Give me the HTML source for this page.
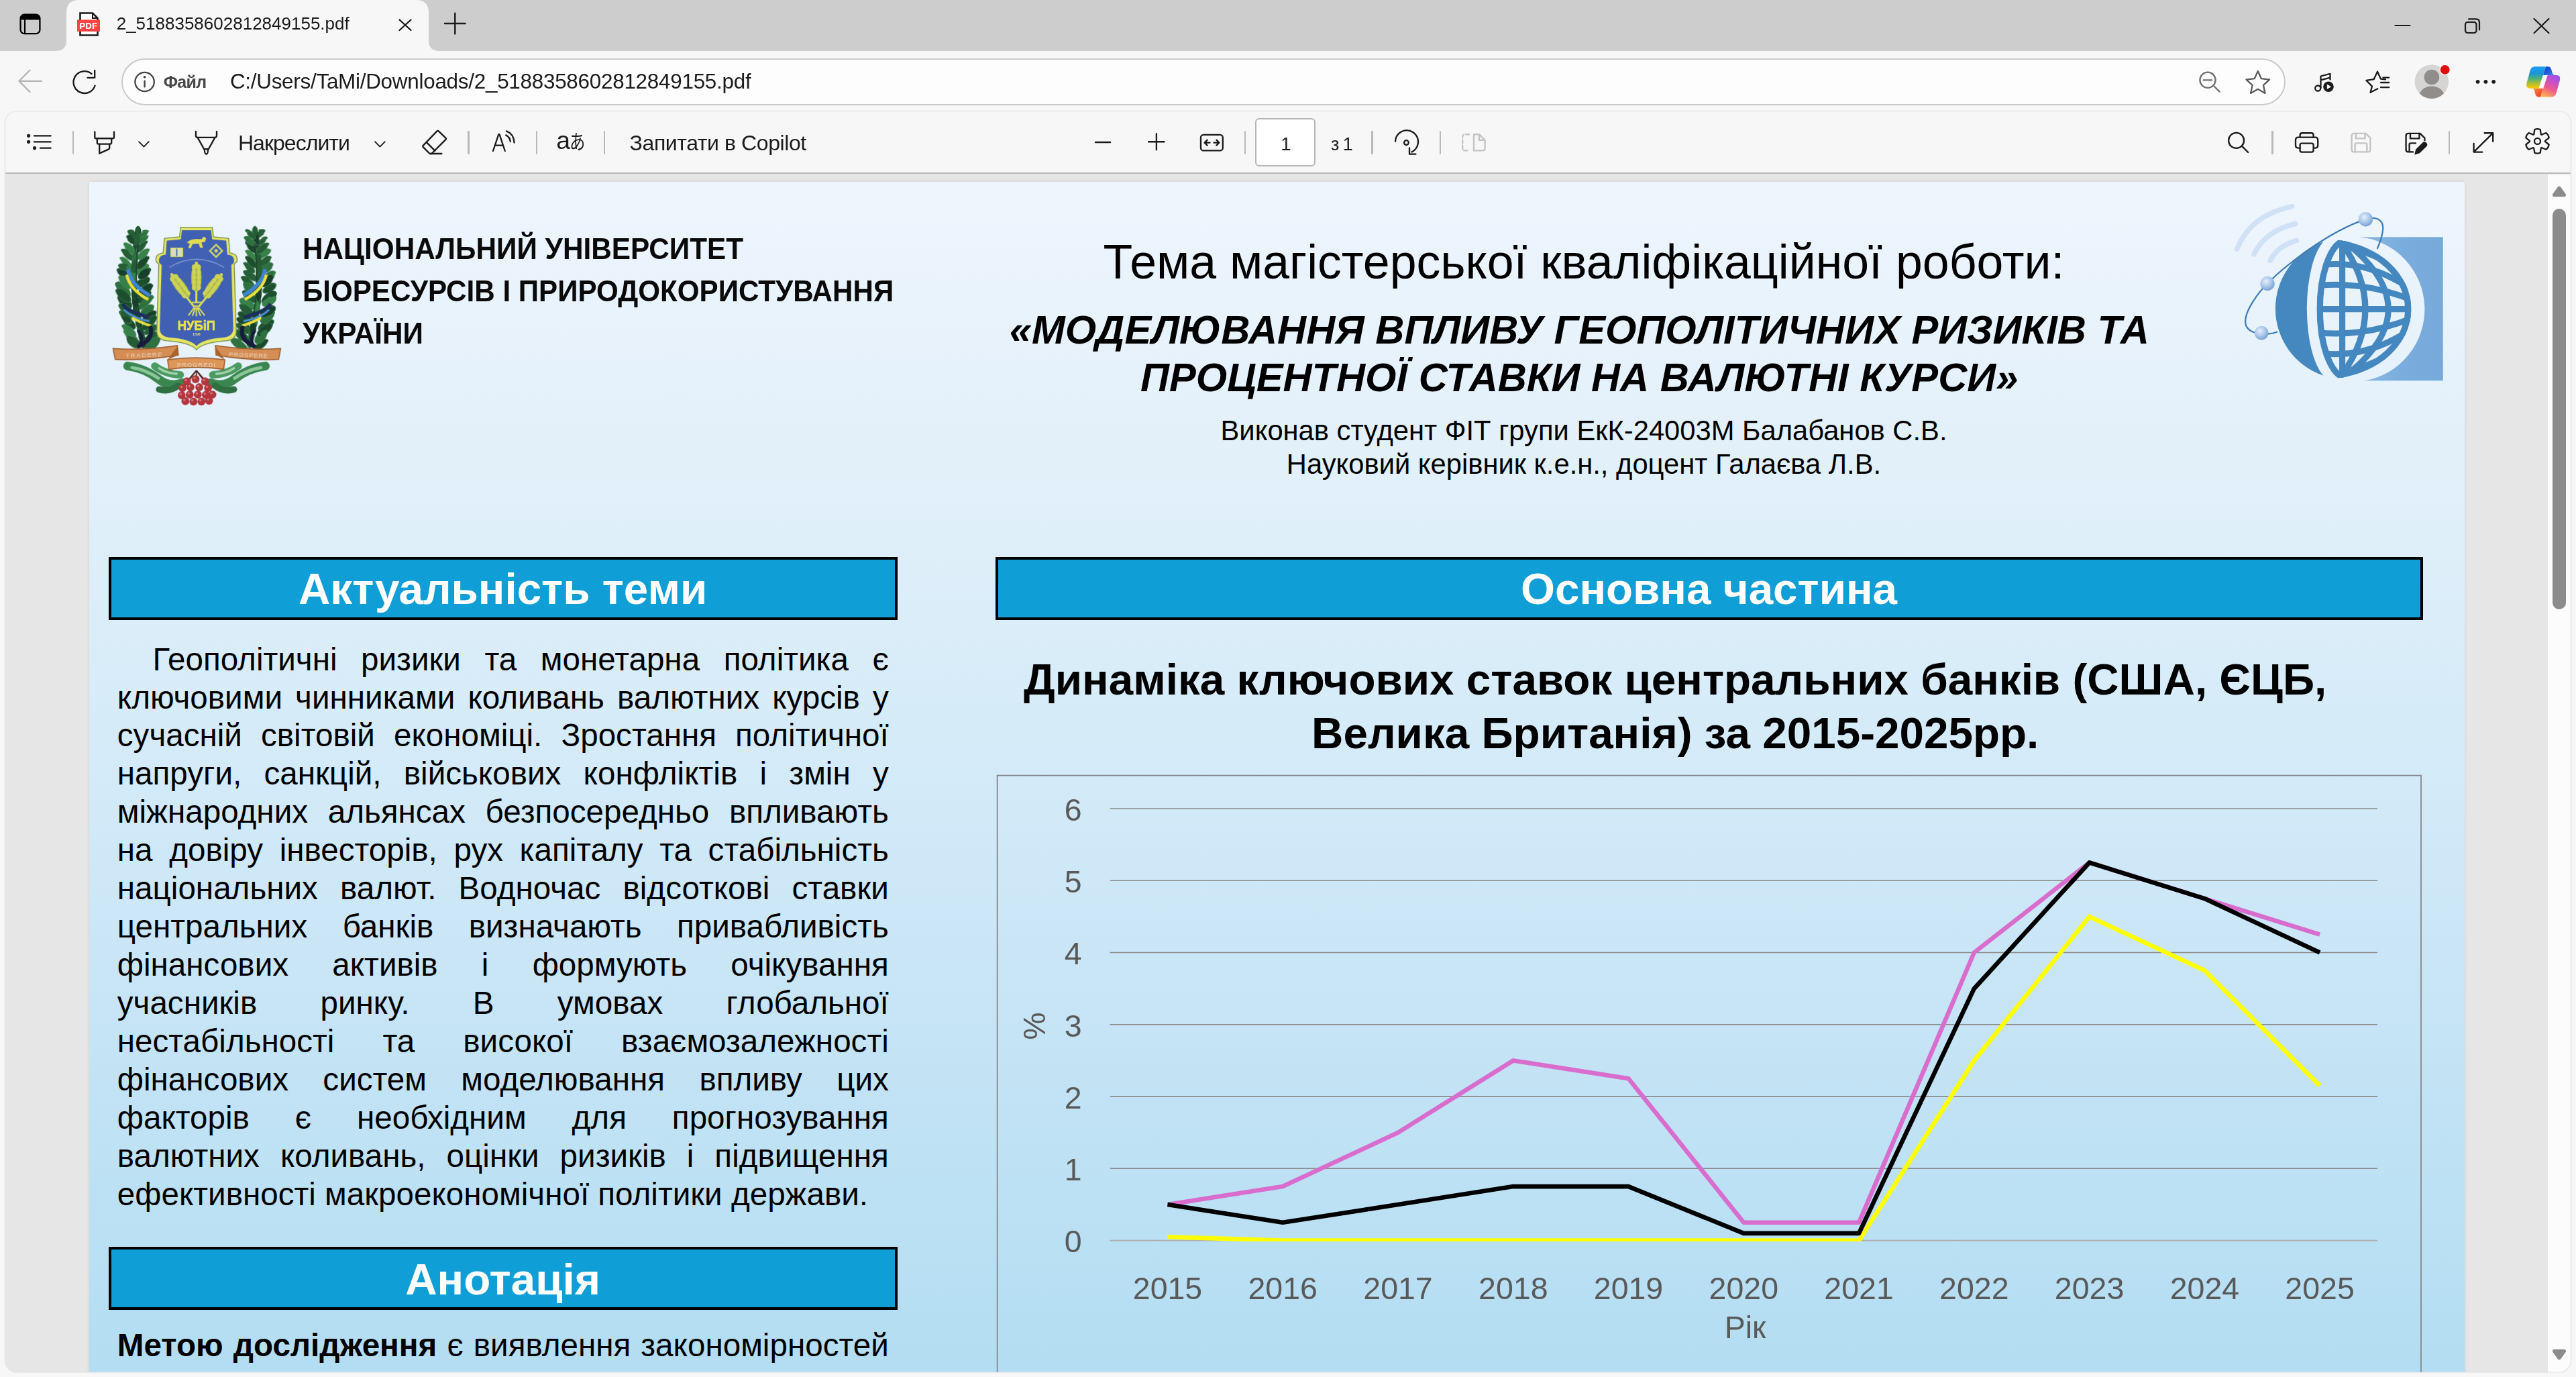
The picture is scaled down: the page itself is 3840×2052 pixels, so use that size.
<!DOCTYPE html>
<html lang="uk"><head><meta charset="utf-8"><title>2_5188358602812849155.pdf</title>
<style>
html,body{margin:0;padding:0;}
body{width:3840px;height:2052px;overflow:hidden;background:#f7f7f7;position:relative;font-family:"Liberation Sans",sans-serif;color:#000;}
.abs{position:absolute;}
.t{position:absolute;white-space:nowrap;}
.ui{color:#1b1b1b;}

#tabstrip{left:0;top:0;width:3840px;height:76px;background:#cdcdcd;}
#addr{left:181px;top:87px;width:3222px;height:66px;border:2px solid #c9c9c9;border-radius:36px;background:#fdfdfd;}
#viewer{left:0;top:0;width:3840px;height:2052px;background:#e6e6e6;clip-path:inset(166.4px 8.2px 7.6px 8.2px round 17px);}
#pdfbar{left:0;top:166px;width:3840px;height:90.6px;background:#f7f7f7;border-bottom:2.4px solid #bababa;}
#pginput{left:1871.2px;top:176.2px;width:86px;height:68px;border:2px solid #b6b6b6;border-radius:6px;background:#fff;}
.sep{position:absolute;width:2.5px;height:35px;top:194.5px;background:#b9b9b9;border-radius:1px;}
#sbtrack{left:3798px;top:260px;width:34px;height:1790px;background:#fcfcfc;}
#sbthumb{left:3805px;top:311px;width:20px;height:597px;border-radius:10px;background:#8b8b8b;}
#icons{left:0;top:0;}
#icons .s{fill:none;stroke:#1b1b1b;stroke-width:2.35;stroke-linecap:round;stroke-linejoin:round;}
#icons .g{fill:none;stroke:#c3c3c3;stroke-width:2.35;stroke-linecap:round;stroke-linejoin:round;}
#icons .m{fill:none;stroke:#707070;stroke-width:2.3;stroke-linecap:round;stroke-linejoin:round;}


#page{left:133px;top:271px;width:3541px;height:1800px;box-shadow:0 0 5px rgba(0,0,0,0.10);background:linear-gradient(180deg,#eef5fd 0px,#e2f0fa 420px,#d3eaf8 900px,#c3e3f5 1330px,#b3ddf2 1773px);}
.hbox{position:absolute;box-sizing:border-box;border:4.5px solid #000;background:#0f9ed5;}
.hd{font-weight:700;color:#fff;font-size:65.55px;}
.bl{position:absolute;left:174.8px;width:1150px;font-size:47.6px;line-height:56.85px;text-align:justify;text-align-last:justify;white-space:nowrap;}

</style></head><body>

<div id="tabstrip" class="abs"></div>
<div id="addr" class="abs"></div>
<div class="abs" style="left:8.2px;top:166.4px;width:3823.6px;height:1878px;border-radius:17px;box-shadow:0 0 0 1px rgba(0,0,0,0.06),0 1px 3px rgba(0,0,0,0.10);"></div>
<div id="viewer" class="abs">
  <div id="pdfbar" class="abs"></div>
  
<div id="page" class="abs"></div>

<svg class="abs" style="left:150px;top:320px" width="290" height="300" viewBox="0 0 1331 1377">
<defs><filter id="soft" x="-5%" y="-5%" width="110%" height="110%"><feGaussianBlur stdDeviation="3.2"/></filter></defs>
<g filter="url(#soft)">
<g><ellipse cx="311" cy="246" rx="14" ry="26" transform="rotate(72 311 246)" fill="#37804a"/><ellipse cx="229" cy="141" rx="22" ry="45" transform="rotate(-58 229 141)" fill="#275f36" stroke="#4f8a5e" stroke-width="3"/><ellipse cx="325" cy="493" rx="19" ry="36" transform="rotate(71 325 493)" fill="#18402a"/><ellipse cx="237" cy="262" rx="22" ry="44" fill="#2f7040"/><ellipse cx="305" cy="351" rx="16" ry="27" transform="rotate(81 305 351)" fill="#37804a"/><ellipse cx="136" cy="379" rx="15" ry="28" transform="rotate(-85 136 379)" fill="#18402a"/><ellipse cx="243" cy="215" rx="22" ry="44" fill="#1f4f2e"/><ellipse cx="219" cy="177" rx="22" ry="39" transform="rotate(-61 219 177)" fill="#1c4a2c" stroke="#4f8a5e" stroke-width="3"/><ellipse cx="154" cy="511" rx="32" ry="67" transform="rotate(-42 154 511)" fill="#2f7040" stroke="#4f8a5e" stroke-width="3"/><ellipse cx="175" cy="372" rx="23" ry="60" transform="rotate(-61 175 372)" fill="#275f36" stroke="#4f8a5e" stroke-width="3"/><ellipse cx="307" cy="113" rx="10" ry="23" transform="rotate(91 307 113)" fill="#2f7040"/><ellipse cx="152" cy="675" rx="17" ry="30" transform="rotate(-59 152 675)" fill="#255c34"/><ellipse cx="319" cy="379" rx="18" ry="27" transform="rotate(76 319 379)" fill="#18402a"/><ellipse cx="227" cy="449" rx="22" ry="44" fill="#37804a"/><ellipse cx="283" cy="377" rx="26" ry="50" transform="rotate(54 283 377)" fill="#37804a" stroke="#4f8a5e" stroke-width="3"/><ellipse cx="167" cy="598" rx="32" ry="58" transform="rotate(-47 167 598)" fill="#1c4a2c" stroke="#4f8a5e" stroke-width="3"/><ellipse cx="242" cy="637" rx="22" ry="44" fill="#1c4a2c"/><ellipse cx="250" cy="684" rx="22" ry="44" fill="#1f4f2e"/><ellipse cx="256" cy="121" rx="22" ry="44" fill="#18402a"/><ellipse cx="187" cy="275" rx="22" ry="51" transform="rotate(-46 187 275)" fill="#255c34" stroke="#4f8a5e" stroke-width="3"/><ellipse cx="132" cy="485" rx="20" ry="37" transform="rotate(-64 132 485)" fill="#2f7040"/><ellipse cx="303" cy="147" rx="10" ry="26" transform="rotate(93 303 147)" fill="#2f7040"/><ellipse cx="286" cy="464" rx="28" ry="54" transform="rotate(62 286 464)" fill="#1f4f2e" stroke="#4f8a5e" stroke-width="3"/><ellipse cx="285" cy="329" rx="25" ry="55" transform="rotate(41 285 329)" fill="#1c4a2c" stroke="#4f8a5e" stroke-width="3"/><ellipse cx="199" cy="232" rx="25" ry="42" transform="rotate(-43 199 232)" fill="#37804a" stroke="#4f8a5e" stroke-width="3"/><ellipse cx="229" cy="496" rx="22" ry="44" fill="#275f36"/><ellipse cx="345" cy="840" rx="26" ry="55" transform="rotate(57 345 840)" fill="#255c34" stroke="#4f8a5e" stroke-width="3"/><ellipse cx="269" cy="777" rx="22" ry="44" fill="#275f36"/><ellipse cx="135" cy="526" rx="19" ry="35" transform="rotate(-75 135 526)" fill="#1f4f2e"/><ellipse cx="179" cy="333" rx="21" ry="56" transform="rotate(-41 179 333)" fill="#37804a" stroke="#4f8a5e" stroke-width="3"/><ellipse cx="157" cy="307" rx="13" ry="31" transform="rotate(-61 157 307)" fill="#37804a"/><ellipse cx="177" cy="206" rx="15" ry="23" transform="rotate(-64 177 206)" fill="#37804a"/><ellipse cx="285" cy="139" rx="17" ry="41" transform="rotate(61 285 139)" fill="#2f7040" stroke="#4f8a5e" stroke-width="3"/><ellipse cx="211" cy="836" rx="26" ry="68" transform="rotate(-44 211 836)" fill="#37804a" stroke="#4f8a5e" stroke-width="3"/><ellipse cx="308" cy="438" rx="17" ry="30" transform="rotate(93 308 438)" fill="#1f4f2e"/><ellipse cx="259" cy="730" rx="22" ry="44" fill="#1c4a2c"/><ellipse cx="157" cy="629" rx="18" ry="37" transform="rotate(-73 157 629)" fill="#275f36"/><ellipse cx="158" cy="405" rx="24" ry="51" transform="rotate(-57 158 405)" fill="#18402a" stroke="#4f8a5e" stroke-width="3"/><ellipse cx="307" cy="303" rx="16" ry="30" transform="rotate(61 307 303)" fill="#1c4a2c"/><ellipse cx="295" cy="565" rx="30" ry="57" transform="rotate(50 295 565)" fill="#1f4f2e" stroke="#4f8a5e" stroke-width="3"/><ellipse cx="207" cy="115" rx="14" ry="25" transform="rotate(-87 207 115)" fill="#275f36"/><ellipse cx="236" cy="590" rx="22" ry="44" fill="#18402a"/><ellipse cx="354" cy="886" rx="32" ry="65" transform="rotate(45 354 886)" fill="#2f7040" stroke="#4f8a5e" stroke-width="3"/><ellipse cx="280" cy="824" rx="22" ry="44" fill="#1f4f2e"/><ellipse cx="365" cy="762" rx="14" ry="29" transform="rotate(91 365 762)" fill="#275f36"/><ellipse cx="198" cy="742" rx="27" ry="53" transform="rotate(-45 198 742)" fill="#1c4a2c" stroke="#4f8a5e" stroke-width="3"/><ellipse cx="297" cy="405" rx="28" ry="49" transform="rotate(50 297 405)" fill="#18402a" stroke="#4f8a5e" stroke-width="3"/><ellipse cx="289" cy="272" rx="23" ry="47" transform="rotate(48 289 272)" fill="#37804a" stroke="#4f8a5e" stroke-width="3"/><ellipse cx="317" cy="657" rx="30" ry="51" transform="rotate(54 317 657)" fill="#2f7040" stroke="#4f8a5e" stroke-width="3"/><ellipse cx="303" cy="519" rx="30" ry="65" transform="rotate(47 303 519)" fill="#18402a" stroke="#4f8a5e" stroke-width="3"/><ellipse cx="354" cy="671" rx="17" ry="31" transform="rotate(78 354 671)" fill="#18402a"/><ellipse cx="278" cy="220" rx="20" ry="48" transform="rotate(40 278 220)" fill="#255c34" stroke="#4f8a5e" stroke-width="3"/><ellipse cx="332" cy="697" rx="27" ry="57" transform="rotate(52 332 697)" fill="#18402a" stroke="#4f8a5e" stroke-width="3"/><ellipse cx="197" cy="151" rx="14" ry="22" transform="rotate(-91 197 151)" fill="#1c4a2c"/><ellipse cx="148" cy="436" rx="18" ry="30" transform="rotate(-63 148 436)" fill="#37804a"/><ellipse cx="339" cy="631" rx="18" ry="28" transform="rotate(81 339 631)" fill="#2f7040"/><ellipse cx="232" cy="543" rx="22" ry="44" fill="#1c4a2c"/><ellipse cx="179" cy="655" rx="29" ry="68" transform="rotate(-48 179 655)" fill="#275f36" stroke="#4f8a5e" stroke-width="3"/><ellipse cx="153" cy="346" rx="14" ry="33" transform="rotate(-91 153 346)" fill="#275f36"/><ellipse cx="300" cy="194" rx="12" ry="26" transform="rotate(59 300 194)" fill="#255c34"/><ellipse cx="292" cy="871" rx="22" ry="44" fill="#1f4f2e"/><ellipse cx="228" cy="874" rx="32" ry="55" transform="rotate(-55 228 874)" fill="#255c34" stroke="#4f8a5e" stroke-width="3"/><ellipse cx="317" cy="539" rx="19" ry="31" transform="rotate(75 317 539)" fill="#1f4f2e"/><ellipse cx="354" cy="714" rx="17" ry="37" transform="rotate(68 354 714)" fill="#1f4f2e"/><ellipse cx="206" cy="848" rx="20" ry="30" transform="rotate(-82 206 848)" fill="#255c34"/><ellipse cx="307" cy="600" rx="24" ry="69" transform="rotate(46 307 600)" fill="#2f7040" stroke="#4f8a5e" stroke-width="3"/><ellipse cx="376" cy="860" rx="20" ry="36" transform="rotate(67 376 860)" fill="#2f7040"/><ellipse cx="189" cy="810" rx="16" ry="38" transform="rotate(-65 189 810)" fill="#37804a"/><ellipse cx="145" cy="572" rx="20" ry="32" transform="rotate(-70 145 572)" fill="#1c4a2c"/><ellipse cx="281" cy="173" rx="17" ry="48" transform="rotate(62 281 173)" fill="#2f7040" stroke="#4f8a5e" stroke-width="3"/><ellipse cx="174" cy="701" rx="27" ry="55" transform="rotate(-39 174 701)" fill="#255c34" stroke="#4f8a5e" stroke-width="3"/><ellipse cx="228" cy="402" rx="22" ry="44" fill="#37804a"/><ellipse cx="343" cy="788" rx="23" ry="53" transform="rotate(60 343 788)" fill="#275f36" stroke="#4f8a5e" stroke-width="3"/><ellipse cx="170" cy="462" rx="30" ry="54" transform="rotate(-42 170 462)" fill="#37804a" stroke="#4f8a5e" stroke-width="3"/><ellipse cx="329" cy="574" rx="15" ry="38" transform="rotate(70 329 574)" fill="#2f7040"/><ellipse cx="165" cy="249" rx="14" ry="28" transform="rotate(-69 165 249)" fill="#255c34"/><ellipse cx="157" cy="552" rx="30" ry="63" transform="rotate(-50 157 552)" fill="#1f4f2e" stroke="#4f8a5e" stroke-width="3"/><ellipse cx="196" cy="792" rx="24" ry="58" transform="rotate(-50 196 792)" fill="#37804a" stroke="#4f8a5e" stroke-width="3"/><ellipse cx="332" cy="740" rx="28" ry="68" transform="rotate(45 332 740)" fill="#1f4f2e" stroke="#4f8a5e" stroke-width="3"/><ellipse cx="249" cy="168" rx="22" ry="44" fill="#275f36"/><ellipse cx="176" cy="716" rx="17" ry="29" transform="rotate(-67 176 716)" fill="#1c4a2c"/><ellipse cx="174" cy="766" rx="15" ry="32" transform="rotate(-75 174 766)" fill="#37804a"/><ellipse cx="233" cy="308" rx="22" ry="44" fill="#2f7040"/><ellipse cx="367" cy="814" rx="16" ry="30" transform="rotate(85 367 814)" fill="#255c34"/><ellipse cx="230" cy="355" rx="22" ry="44" fill="#275f36"/><ellipse cx="254" cy="112" rx="15" ry="34" transform="rotate(6 254 112)" fill="#255c34"/><path d="M258,200 Q215,500 300,880" fill="none" stroke="#183c28" stroke-width="9" opacity="0.75"/><path d="M188,372 Q196,470 335,552" fill="none" stroke="#3f84d4" stroke-width="26"/><path d="M178,410 Q200,512 326,580" fill="none" stroke="#eadf3c" stroke-width="20"/><path d="M150,610 Q185,665 330,700" fill="none" stroke="#1c2f5c" stroke-width="24"/><path d="M160,650 Q215,705 335,728" fill="none" stroke="#4a8fd8" stroke-width="14"/><path d="M215,705 Q270,735 348,762" fill="none" stroke="#eadf3c" stroke-width="18"/><path d="M338,760 Q372,850 252,905" fill="none" stroke="#151f3c" stroke-width="28"/><path d="M255,790 Q300,850 260,900" fill="none" stroke="#151f3c" stroke-width="20"/></g>
<g transform="translate(1312,0) scale(-1,1)"><ellipse cx="328" cy="585" rx="18" ry="34" transform="rotate(89 328 585)" fill="#37804a"/><ellipse cx="313" cy="339" rx="13" ry="25" transform="rotate(68 313 339)" fill="#275f36"/><ellipse cx="243" cy="215" rx="22" ry="44" fill="#18402a"/><ellipse cx="190" cy="160" rx="11" ry="21" transform="rotate(-80 190 160)" fill="#275f36"/><ellipse cx="256" cy="121" rx="22" ry="44" fill="#37804a"/><ellipse cx="212" cy="186" rx="18" ry="37" transform="rotate(-53 212 186)" fill="#275f36" stroke="#4f8a5e" stroke-width="3"/><ellipse cx="301" cy="198" rx="14" ry="25" transform="rotate(60 301 198)" fill="#1c4a2c"/><ellipse cx="236" cy="590" rx="22" ry="44" fill="#255c34"/><ellipse cx="292" cy="560" rx="30" ry="56" transform="rotate(50 292 560)" fill="#255c34" stroke="#4f8a5e" stroke-width="3"/><ellipse cx="364" cy="888" rx="27" ry="65" transform="rotate(57 364 888)" fill="#2f7040" stroke="#4f8a5e" stroke-width="3"/><ellipse cx="301" cy="254" rx="13" ry="23" transform="rotate(70 301 254)" fill="#37804a"/><ellipse cx="299" cy="465" rx="24" ry="61" transform="rotate(45 299 465)" fill="#255c34" stroke="#4f8a5e" stroke-width="3"/><ellipse cx="158" cy="728" rx="16" ry="34" transform="rotate(-90 158 728)" fill="#1f4f2e"/><ellipse cx="328" cy="754" rx="24" ry="69" transform="rotate(39 328 754)" fill="#1c4a2c" stroke="#4f8a5e" stroke-width="3"/><ellipse cx="230" cy="136" rx="19" ry="42" transform="rotate(-61 230 136)" fill="#275f36" stroke="#4f8a5e" stroke-width="3"/><ellipse cx="189" cy="322" rx="25" ry="46" transform="rotate(-50 189 322)" fill="#275f36" stroke="#4f8a5e" stroke-width="3"/><ellipse cx="284" cy="419" rx="23" ry="57" transform="rotate(56 284 419)" fill="#275f36" stroke="#4f8a5e" stroke-width="3"/><ellipse cx="366" cy="803" rx="18" ry="32" transform="rotate(77 366 803)" fill="#255c34"/><ellipse cx="150" cy="675" rx="19" ry="32" transform="rotate(-75 150 675)" fill="#2f7040"/><ellipse cx="180" cy="754" rx="27" ry="61" transform="rotate(-60 180 754)" fill="#1f4f2e" stroke="#4f8a5e" stroke-width="3"/><ellipse cx="178" cy="367" rx="26" ry="46" transform="rotate(-59 178 367)" fill="#2f7040" stroke="#4f8a5e" stroke-width="3"/><ellipse cx="335" cy="626" rx="17" ry="31" transform="rotate(76 335 626)" fill="#255c34"/><ellipse cx="237" cy="262" rx="22" ry="44" fill="#255c34"/><ellipse cx="136" cy="479" rx="15" ry="28" transform="rotate(-91 136 479)" fill="#1f4f2e"/><ellipse cx="337" cy="681" rx="17" ry="37" transform="rotate(82 337 681)" fill="#1f4f2e"/><ellipse cx="148" cy="426" rx="17" ry="29" transform="rotate(-61 148 426)" fill="#18402a"/><ellipse cx="156" cy="341" rx="16" ry="26" transform="rotate(-89 156 341)" fill="#2f7040"/><ellipse cx="259" cy="730" rx="22" ry="44" fill="#2f7040"/><ellipse cx="279" cy="224" rx="23" ry="45" transform="rotate(40 279 224)" fill="#1c4a2c" stroke="#4f8a5e" stroke-width="3"/><ellipse cx="145" cy="401" rx="16" ry="34" transform="rotate(-75 145 401)" fill="#2f7040"/><ellipse cx="186" cy="206" rx="13" ry="29" transform="rotate(-72 186 206)" fill="#255c34"/><ellipse cx="215" cy="891" rx="23" ry="55" transform="rotate(-51 215 891)" fill="#1c4a2c" stroke="#4f8a5e" stroke-width="3"/><ellipse cx="332" cy="780" rx="23" ry="64" transform="rotate(60 332 780)" fill="#275f36" stroke="#4f8a5e" stroke-width="3"/><ellipse cx="230" cy="355" rx="22" ry="44" fill="#275f36"/><ellipse cx="306" cy="611" rx="28" ry="62" transform="rotate(60 306 611)" fill="#37804a" stroke="#4f8a5e" stroke-width="3"/><ellipse cx="315" cy="707" rx="27" ry="67" transform="rotate(54 315 707)" fill="#1f4f2e" stroke="#4f8a5e" stroke-width="3"/><ellipse cx="158" cy="505" rx="25" ry="51" transform="rotate(-61 158 505)" fill="#1f4f2e" stroke="#4f8a5e" stroke-width="3"/><ellipse cx="198" cy="269" rx="22" ry="56" transform="rotate(-61 198 269)" fill="#37804a" stroke="#4f8a5e" stroke-width="3"/><ellipse cx="350" cy="728" rx="15" ry="38" transform="rotate(59 350 728)" fill="#1c4a2c"/><ellipse cx="168" cy="762" rx="18" ry="35" transform="rotate(-76 168 762)" fill="#1c4a2c"/><ellipse cx="145" cy="636" rx="18" ry="32" transform="rotate(-90 145 636)" fill="#18402a"/><ellipse cx="280" cy="824" rx="22" ry="44" fill="#2f7040"/><ellipse cx="321" cy="439" rx="15" ry="34" transform="rotate(68 321 439)" fill="#255c34"/><ellipse cx="313" cy="652" rx="28" ry="56" transform="rotate(51 313 652)" fill="#255c34" stroke="#4f8a5e" stroke-width="3"/><ellipse cx="249" cy="168" rx="22" ry="44" fill="#18402a"/><ellipse cx="286" cy="184" rx="19" ry="45" transform="rotate(57 286 184)" fill="#2f7040" stroke="#4f8a5e" stroke-width="3"/><ellipse cx="314" cy="534" rx="18" ry="31" transform="rotate(75 314 534)" fill="#255c34"/><ellipse cx="269" cy="777" rx="22" ry="44" fill="#18402a"/><ellipse cx="176" cy="243" rx="14" ry="31" transform="rotate(-91 176 243)" fill="#37804a"/><ellipse cx="233" cy="308" rx="22" ry="44" fill="#255c34"/><ellipse cx="167" cy="427" rx="26" ry="61" transform="rotate(-50 167 427)" fill="#2f7040" stroke="#4f8a5e" stroke-width="3"/><ellipse cx="250" cy="684" rx="22" ry="44" fill="#1c4a2c"/><ellipse cx="291" cy="365" rx="21" ry="46" transform="rotate(45 291 365)" fill="#275f36" stroke="#4f8a5e" stroke-width="3"/><ellipse cx="308" cy="158" rx="12" ry="25" transform="rotate(86 308 158)" fill="#2f7040"/><ellipse cx="354" cy="754" rx="14" ry="35" transform="rotate(90 354 754)" fill="#275f36"/><ellipse cx="227" cy="449" rx="22" ry="44" fill="#275f36"/><ellipse cx="229" cy="496" rx="22" ry="44" fill="#18402a"/><ellipse cx="172" cy="701" rx="31" ry="57" transform="rotate(-50 172 701)" fill="#2f7040" stroke="#4f8a5e" stroke-width="3"/><ellipse cx="344" cy="829" rx="29" ry="57" transform="rotate(51 344 829)" fill="#255c34" stroke="#4f8a5e" stroke-width="3"/><ellipse cx="304" cy="112" rx="12" ry="20" transform="rotate(64 304 112)" fill="#275f36"/><ellipse cx="167" cy="662" rx="30" ry="58" transform="rotate(-60 167 662)" fill="#18402a" stroke="#4f8a5e" stroke-width="3"/><ellipse cx="193" cy="865" rx="14" ry="30" transform="rotate(-77 193 865)" fill="#1c4a2c"/><ellipse cx="242" cy="637" rx="22" ry="44" fill="#37804a"/><ellipse cx="160" cy="568" rx="31" ry="59" transform="rotate(-53 160 568)" fill="#1f4f2e" stroke="#4f8a5e" stroke-width="3"/><ellipse cx="170" cy="452" rx="27" ry="53" transform="rotate(-41 170 452)" fill="#18402a" stroke="#4f8a5e" stroke-width="3"/><ellipse cx="208" cy="232" rx="22" ry="52" transform="rotate(-48 208 232)" fill="#255c34" stroke="#4f8a5e" stroke-width="3"/><ellipse cx="292" cy="871" rx="22" ry="44" fill="#2f7040"/><ellipse cx="167" cy="296" rx="15" ry="25" transform="rotate(-75 167 296)" fill="#275f36"/><ellipse cx="232" cy="543" rx="22" ry="44" fill="#18402a"/><ellipse cx="279" cy="280" rx="21" ry="41" transform="rotate(46 279 280)" fill="#37804a" stroke="#4f8a5e" stroke-width="3"/><ellipse cx="216" cy="837" rx="31" ry="55" transform="rotate(-39 216 837)" fill="#2f7040" stroke="#4f8a5e" stroke-width="3"/><ellipse cx="208" cy="110" rx="12" ry="23" transform="rotate(-92 208 110)" fill="#275f36"/><ellipse cx="282" cy="138" rx="19" ry="37" transform="rotate(43 282 138)" fill="#275f36" stroke="#4f8a5e" stroke-width="3"/><ellipse cx="279" cy="326" rx="23" ry="46" transform="rotate(41 279 326)" fill="#1f4f2e" stroke="#4f8a5e" stroke-width="3"/><ellipse cx="137" cy="569" rx="16" ry="29" transform="rotate(-93 137 569)" fill="#37804a"/><ellipse cx="228" cy="402" rx="22" ry="44" fill="#275f36"/><ellipse cx="288" cy="505" rx="32" ry="52" transform="rotate(51 288 505)" fill="#2f7040" stroke="#4f8a5e" stroke-width="3"/><ellipse cx="159" cy="595" rx="26" ry="52" transform="rotate(-62 159 595)" fill="#37804a" stroke="#4f8a5e" stroke-width="3"/><ellipse cx="386" cy="862" rx="17" ry="36" transform="rotate(85 386 862)" fill="#2f7040"/><ellipse cx="306" cy="393" rx="14" ry="32" transform="rotate(84 306 393)" fill="#275f36"/><ellipse cx="138" cy="542" rx="20" ry="33" transform="rotate(-79 138 542)" fill="#1f4f2e"/><ellipse cx="301" cy="300" rx="14" ry="25" transform="rotate(61 301 300)" fill="#1f4f2e"/><ellipse cx="310" cy="479" rx="20" ry="29" transform="rotate(77 310 479)" fill="#2f7040"/><ellipse cx="190" cy="788" rx="29" ry="64" transform="rotate(-51 190 788)" fill="#1c4a2c" stroke="#4f8a5e" stroke-width="3"/><ellipse cx="194" cy="811" rx="19" ry="30" transform="rotate(-58 194 811)" fill="#2f7040"/><ellipse cx="254" cy="112" rx="15" ry="34" transform="rotate(6 254 112)" fill="#255c34"/><path d="M258,200 Q215,500 300,880" fill="none" stroke="#183c28" stroke-width="9" opacity="0.75"/><path d="M188,372 Q196,470 335,552" fill="none" stroke="#3f84d4" stroke-width="26"/><path d="M178,410 Q200,512 326,580" fill="none" stroke="#eadf3c" stroke-width="20"/><path d="M150,610 Q185,665 330,700" fill="none" stroke="#1c2f5c" stroke-width="24"/><path d="M160,650 Q215,705 335,728" fill="none" stroke="#4a8fd8" stroke-width="14"/><path d="M215,705 Q270,735 348,762" fill="none" stroke="#eadf3c" stroke-width="18"/><path d="M338,760 Q372,850 252,905" fill="none" stroke="#151f3c" stroke-width="28"/><path d="M255,790 Q300,850 260,900" fill="none" stroke="#151f3c" stroke-width="20"/></g>
<!-- bottom curls -->
<g fill="none" stroke="#3f8d52" stroke-linecap="round">
<path d="M185,1035 Q300,1050 390,1120 Q470,1185 560,1150" stroke-width="60" stroke="#3a8550"/>
<path d="M215,1045 Q310,1060 395,1118" stroke-width="22" stroke="#8cc79a"/>
<path d="M370,1035 Q440,1090 545,1095" stroke-width="50" stroke="#4b9a60"/>
<path d="M400,1050 Q450,1085 520,1088" stroke-width="16" stroke="#a3d4ae"/>
<path d="M400,1195 Q470,1215 530,1170" stroke-width="44" stroke="#2f7040"/>
<path d="M1127,1035 Q1012,1050 922,1120 Q842,1185 752,1150" stroke-width="60" stroke="#3a8550"/>
<path d="M1097,1045 Q1002,1060 917,1118" stroke-width="22" stroke="#8cc79a"/>
<path d="M942,1035 Q872,1090 767,1095" stroke-width="50" stroke="#4b9a60"/>
<path d="M912,1050 Q862,1085 792,1088" stroke-width="16" stroke="#a3d4ae"/>
<path d="M912,1195 Q842,1215 782,1170" stroke-width="44" stroke="#2f7040"/>
</g>
<!-- shield -->
<path d="M548,86 H764 L772,152 L876,162 L884,262 Q944,268 932,322 L914,338 L928,800 Q926,852 862,862 Q702,872 656,924 Q610,872 450,862 Q386,852 384,800 L398,338 L380,322 Q368,268 428,262 L436,162 L540,152 Z" fill="#e4e660" stroke="#6f8a55" stroke-width="6"/>
<path d="M548,86 H764 L772,152 L876,162 L884,262 Q944,268 932,322 L914,338 L928,800 Q926,852 862,862 Q702,872 656,924 Q610,872 450,862 Q386,852 384,800 L398,338 L380,322 Q368,268 428,262 L436,162 L540,152 Z" fill="#4060b4" transform="translate(656,500) scale(0.925,0.945) translate(-656,-503)"/>
<path d="M470,360 Q655,250 845,360" fill="none" stroke="#7f9ad0" stroke-width="7"/>
<g transform="rotate(0 655 430)"><ellipse cx="655" cy="430" rx="36" ry="98" fill="#a9b64e"/><ellipse cx="638" cy="360" rx="14" ry="20" fill="#cdd355"/><ellipse cx="672" cy="360" rx="14" ry="20" fill="#cdd355"/><ellipse cx="638" cy="394" rx="14" ry="20" fill="#cdd355"/><ellipse cx="672" cy="394" rx="14" ry="20" fill="#cdd355"/><ellipse cx="638" cy="428" rx="14" ry="20" fill="#cdd355"/><ellipse cx="672" cy="428" rx="14" ry="20" fill="#cdd355"/><ellipse cx="638" cy="462" rx="14" ry="20" fill="#cdd355"/><ellipse cx="672" cy="462" rx="14" ry="20" fill="#cdd355"/><ellipse cx="638" cy="496" rx="14" ry="20" fill="#cdd355"/><ellipse cx="672" cy="496" rx="14" ry="20" fill="#cdd355"/><ellipse cx="655" cy="342" rx="12" ry="22" fill="#cdd355"/></g><g transform="rotate(-36 545 490)"><ellipse cx="545" cy="490" rx="36" ry="98" fill="#a9b64e"/><ellipse cx="528" cy="420" rx="14" ry="20" fill="#cdd355"/><ellipse cx="562" cy="420" rx="14" ry="20" fill="#cdd355"/><ellipse cx="528" cy="454" rx="14" ry="20" fill="#cdd355"/><ellipse cx="562" cy="454" rx="14" ry="20" fill="#cdd355"/><ellipse cx="528" cy="488" rx="14" ry="20" fill="#cdd355"/><ellipse cx="562" cy="488" rx="14" ry="20" fill="#cdd355"/><ellipse cx="528" cy="522" rx="14" ry="20" fill="#cdd355"/><ellipse cx="562" cy="522" rx="14" ry="20" fill="#cdd355"/><ellipse cx="528" cy="556" rx="14" ry="20" fill="#cdd355"/><ellipse cx="562" cy="556" rx="14" ry="20" fill="#cdd355"/><ellipse cx="545" cy="402" rx="12" ry="22" fill="#cdd355"/></g><g transform="rotate(36 768 490)"><ellipse cx="768" cy="490" rx="36" ry="98" fill="#a9b64e"/><ellipse cx="751" cy="420" rx="14" ry="20" fill="#cdd355"/><ellipse cx="785" cy="420" rx="14" ry="20" fill="#cdd355"/><ellipse cx="751" cy="454" rx="14" ry="20" fill="#cdd355"/><ellipse cx="785" cy="454" rx="14" ry="20" fill="#cdd355"/><ellipse cx="751" cy="488" rx="14" ry="20" fill="#cdd355"/><ellipse cx="785" cy="488" rx="14" ry="20" fill="#cdd355"/><ellipse cx="751" cy="522" rx="14" ry="20" fill="#cdd355"/><ellipse cx="785" cy="522" rx="14" ry="20" fill="#cdd355"/><ellipse cx="751" cy="556" rx="14" ry="20" fill="#cdd355"/><ellipse cx="785" cy="556" rx="14" ry="20" fill="#cdd355"/><ellipse cx="768" cy="402" rx="12" ry="22" fill="#cdd355"/></g><path d="M655,520 V600 M585,560 L640,630 M728,560 L670,630" stroke="#d8dc55" stroke-width="14" fill="none"/><path d="M625,600 H688 M630,625 H682" stroke="#d8dc55" stroke-width="10" fill="none"/><path d="M640,635 L600,690 M655,635 V695 M670,635 L712,690 M648,635 L628,692 M662,635 L684,692" stroke="#e4e45a" stroke-width="9" fill="none"/>
<!-- horse / book / ornament -->
<path d="M590,190 Q620,160 690,168 L705,150 L722,160 L715,185 L690,190 L700,225 L680,225 L672,198 L630,200 L615,230 L600,228 L610,198 Z" fill="#e2dc50"/>
<path d="M482,230 H560 V285 H482 Z" fill="#d9dcc0" stroke="#e4e660" stroke-width="8"/>
<path d="M521,232 V284" stroke="#4060b4" stroke-width="8"/>
<path d="M790,205 L832,247 L790,289 L748,247 Z" fill="none" stroke="#cfd46a" stroke-width="12"/>
<circle cx="790" cy="247" r="12" fill="#cfd46a"/>
<!-- ribbon -->
<path d="M85,915 Q300,930 525,895 L532,960 Q300,1000 100,990 Z" fill="#d58d52" stroke="#9a5a2c" stroke-width="7"/>
<path d="M785,895 Q1010,930 1232,915 L1218,990 Q1010,1000 790,960 Z" fill="#d58d52" stroke="#9a5a2c" stroke-width="7"/>
<path d="M458,992 Q650,965 850,992 L842,1058 Q650,1030 468,1058 Z" fill="#dd9558" stroke="#9a5a2c" stroke-width="7"/>
<path d="M458,992 L525,900 L532,960 Z M850,992 L785,900 L790,960 Z" fill="#a8642f"/>
<!-- berries -->
<path d="M655,1065 L600,1130 M655,1065 L655,1120 M655,1065 L712,1130 M655,1065 L570,1180 M655,1065 L740,1180" stroke="#4a241c" stroke-width="8" fill="none"/>
<circle cx="590" cy="1140" r="27" fill="#b3343c"/><circle cx="583" cy="1132" r="8" fill="#d9767a"/><circle cx="650" cy="1125" r="27" fill="#b3343c"/><circle cx="643" cy="1117" r="8" fill="#d9767a"/><circle cx="715" cy="1140" r="27" fill="#b3343c"/><circle cx="708" cy="1132" r="8" fill="#d9767a"/><circle cx="560" cy="1185" r="27" fill="#b3343c"/><circle cx="553" cy="1177" r="8" fill="#d9767a"/><circle cx="615" cy="1180" r="27" fill="#b3343c"/><circle cx="608" cy="1172" r="8" fill="#d9767a"/><circle cx="675" cy="1180" r="27" fill="#b3343c"/><circle cx="668" cy="1172" r="8" fill="#d9767a"/><circle cx="735" cy="1185" r="27" fill="#b3343c"/><circle cx="728" cy="1177" r="8" fill="#d9767a"/><circle cx="555" cy="1235" r="27" fill="#b3343c"/><circle cx="548" cy="1227" r="8" fill="#d9767a"/><circle cx="610" cy="1230" r="27" fill="#b3343c"/><circle cx="603" cy="1222" r="8" fill="#d9767a"/><circle cx="665" cy="1230" r="27" fill="#b3343c"/><circle cx="658" cy="1222" r="8" fill="#d9767a"/><circle cx="720" cy="1232" r="27" fill="#b3343c"/><circle cx="713" cy="1224" r="8" fill="#d9767a"/><circle cx="765" cy="1230" r="27" fill="#b3343c"/><circle cx="758" cy="1222" r="8" fill="#d9767a"/><circle cx="580" cy="1275" r="27" fill="#b3343c"/><circle cx="573" cy="1267" r="8" fill="#d9767a"/><circle cx="635" cy="1278" r="27" fill="#b3343c"/><circle cx="628" cy="1270" r="8" fill="#d9767a"/><circle cx="690" cy="1278" r="27" fill="#b3343c"/><circle cx="683" cy="1270" r="8" fill="#d9767a"/><circle cx="742" cy="1272" r="27" fill="#b3343c"/><circle cx="735" cy="1264" r="8" fill="#d9767a"/>
</g>
<g font-family="Liberation Sans, sans-serif" font-weight="700" text-anchor="middle" filter="url(#soft)">
<text x="656" y="790" font-size="92" fill="#e8e24a" textLength="258" lengthAdjust="spacingAndGlyphs" stroke="#e8e24a" stroke-width="3">НУБіП</text>
<text x="656" y="826" font-size="24" fill="#d8d890">1898</text>
<text x="300" y="975" font-size="44" fill="#e6cdb2" opacity="0.85" transform="rotate(-2 300 975)" letter-spacing="6">TRADERE</text>
<text x="655" y="1040" font-size="44" fill="#e6cdb2" opacity="0.85" letter-spacing="4">PROGREDI</text>
<text x="1012" y="975" font-size="44" fill="#e6cdb2" opacity="0.85" transform="rotate(2 1012 975)" letter-spacing="3">PROSPERE</text>
</g>
</svg>


<svg class="abs" style="left:3240px;top:270px" width="600" height="350" viewBox="0 0 2361 1377">
<defs>
<radialGradient id="ball" cx="0.4" cy="0.35" r="0.7"><stop offset="0" stop-color="#e6effa"/><stop offset="0.55" stop-color="#a9c6e8"/><stop offset="1" stop-color="#6f9ad0"/></radialGradient>
<linearGradient id="sq" x1="0" y1="0" x2="1" y2="0"><stop offset="0" stop-color="#8db9e2"/><stop offset="0.5" stop-color="#7aaddd"/><stop offset="1" stop-color="#77aadb"/></linearGradient>
<clipPath id="gclip"><path d="M965,345 A170,420 0 0 0 965,1155 A509,410 0 0 0 965,345 Z"/></clipPath>
</defs>
<!-- signal arcs -->
<g fill="none" stroke="#cfe1f5" stroke-width="30" stroke-linecap="round" opacity="0.95">
<path d="M372,398 Q450,200 695,148"/>
<path d="M472,428 Q540,290 715,250"/>
<path d="M567,465 Q610,380 722,348"/>
</g>
<!-- light square with circular bite -->
<path d="M1092,327 H1581 V1170 H1122 A426,426 0 0 0 1092,327 Z" fill="url(#sq)"/>
<!-- dark crescent -->
<path d="M880,355 A414,414 0 0 0 880,1140 A151.5,420 0 0 1 880,355 Z" fill="#4588bf"/>
<!-- orbit -->
<path d="M606,884 C560,905 428,905 422,830 C416,760 500,650 551,600 C650,500 900,300 1127,223 C1200,200 1240,235 1226,300 C1220,340 1206,370 1196,394" fill="none" stroke="#3f7db4" stroke-width="9" stroke-linecap="round"/>
<!-- globe grid -->
<g fill="none" stroke="#4588bf" stroke-width="36" clip-path="url(#gclip)">
<path d="M990,330 V1170"/>
<path d="M975,345 Q1275,750 975,1155"/>
<path d="M985,340 Q1535,750 985,1160"/>
<path d="M840,750 H1400"/>
<path d="M850,612 Q1130,585 1420,705"/>
<path d="M850,888 Q1130,915 1420,795"/>
<path d="M880,490 Q1150,460 1420,650"/>
<path d="M880,1010 Q1150,1040 1420,850"/>
<path d="M1040,395 Q1280,460 1420,600" stroke-width="30"/>
<path d="M1040,1105 Q1280,1040 1420,900" stroke-width="30"/>
</g>
<path d="M965,345 A170,420 0 0 0 965,1155 A509,410 0 0 0 965,345 Z" fill="none" stroke="#4588bf" stroke-width="74" clip-path="url(#gclip)"/>
<!-- balls -->
<circle cx="1127" cy="223" r="42" fill="url(#ball)"/>
<circle cx="551" cy="600" r="42" fill="url(#ball)"/>
<circle cx="516" cy="890" r="41" fill="url(#ball)"/>
</svg>

<div class="t" style="left:451.2px;top:344.4px;font-size:45.2px;line-height:54px;font-weight:700;color:#0a0a0a;filter:blur(0.55px);transform-origin:0 0;transform:scaleX(0.9365);">НАЦІОНАЛЬНИЙ УНІВЕРСИТЕТ</div>
<div class="t" style="left:451.2px;top:407.1px;font-size:45.2px;line-height:54px;font-weight:700;color:#0a0a0a;filter:blur(0.55px);transform-origin:0 0;transform:scaleX(0.9325);">БІОРЕСУРСІВ І ПРИРОДОКОРИСТУВАННЯ</div>
<div class="t" style="left:451.2px;top:469.8px;font-size:45.2px;line-height:54px;font-weight:700;color:#0a0a0a;filter:blur(0.55px);transform-origin:0 0;transform:scaleX(0.9365);">УКРАЇНИ</div>

<div class="t" style="left:1161.0px;width:2400px;text-align:center;top:348.3px;font-size:71.6px;line-height:85.92px;">Тема магістерської кваліфікаційної роботи:</div>
<div class="t" style="left:1154.3px;width:2400px;text-align:center;top:455.7px;font-size:59.68px;line-height:71.62px;font-weight:700;font-style:italic;">«МОДЕЛЮВАННЯ ВПЛИВУ ГЕОПОЛІТИЧНИХ РИЗИКІВ ТА</div>
<div class="t" style="left:1154.2px;width:2400px;text-align:center;top:526.5px;font-size:59.68px;line-height:71.62px;font-weight:700;font-style:italic;">ПРОЦЕНТНОЇ СТАВКИ НА ВАЛЮТНІ КУРСИ»</div>
<div class="t" style="left:1161.0px;width:2400px;text-align:center;top:617.0px;font-size:41.72px;line-height:50.06px;">Виконав студент ФІТ групи ЕкК-24003М Балабанов С.В.</div>
<div class="t" style="left:1161.0px;width:2400px;text-align:center;top:667.3px;font-size:41.72px;line-height:50.06px;">Науковий керівник к.е.н., доцент Галаєва Л.В.</div>
<div class="hbox" style="left:162px;top:829.7px;width:1176px;height:94px;"></div>
<div class="t hd" style="left:-50.4px;width:1600px;text-align:center;top:839.3px;line-height:78.3px;">Актуальність теми</div>
<div class="hbox" style="left:162px;top:1858px;width:1176px;height:94px;"></div>
<div class="t hd" style="left:-50.4px;width:1600px;text-align:center;top:1867.6px;line-height:78.3px;">Анотація</div>
<div class="hbox" style="left:1484.2px;top:829.7px;width:2128px;height:94px;"></div>
<div class="t hd" style="left:1747.5px;width:1600px;text-align:center;top:839.3px;line-height:78.3px;">Основна частина</div>
<div class="bl" style="top:954.5px;left:227.4px;width:1097.4px;">Геополітичні ризики та монетарна політика є</div>
<div class="bl" style="top:1011.5px;">ключовими чинниками коливань валютних курсів у</div>
<div class="bl" style="top:1068.4px;">сучасній світовій економіці. Зростання політичної</div>
<div class="bl" style="top:1125.4px;">напруги, санкцій, військових конфліктів і змін у</div>
<div class="bl" style="top:1182.4px;">міжнародних альянсах безпосередньо впливають</div>
<div class="bl" style="top:1239.4px;">на довіру інвесторів, рух капіталу та стабільність</div>
<div class="bl" style="top:1296.4px;">національних валют. Водночас відсоткові ставки</div>
<div class="bl" style="top:1353.3px;">центральних банків визначають привабливість</div>
<div class="bl" style="top:1410.3px;">фінансових активів і формують очікування</div>
<div class="bl" style="top:1467.3px;">учасників ринку. В умовах глобальної</div>
<div class="bl" style="top:1524.3px;">нестабільності та високої взаємозалежності</div>
<div class="bl" style="top:1581.3px;">фінансових систем моделювання впливу цих</div>
<div class="bl" style="top:1638.2px;">факторів є необхідним для прогнозування</div>
<div class="bl" style="top:1695.2px;">валютних коливань, оцінки ризиків і підвищення</div>
<div class="bl" style="top:1752.2px;text-align-last:left;">ефективності макроекономічної політики держави.</div>
<div class="bl" style="top:1977.0px;"><b>Метою дослідження</b> є виявлення закономірностей</div>

<div class="t" style="left:1297.2px;width:2400px;text-align:center;top:973.7px;font-size:65.6px;line-height:78.72px;font-weight:700;">Динаміка ключових ставок центральних банків (США, ЄЦБ,</div>
<div class="t" style="left:1297.2px;width:2400px;text-align:center;top:1053.6px;font-size:65.6px;line-height:78.72px;font-weight:700;">Велика Британія) за 2015-2025рр.</div>

<svg class="abs" style="left:0;top:0" width="3840" height="2052" viewBox="0 0 3840 2052">
<rect x="1486.6" y="1155.6" width="2122.4" height="1000" fill="none" stroke="#808388" stroke-width="1.7"/>
<line x1="1654.6" x2="3544.0" y1="1848.6" y2="1848.6" stroke="#adadad" stroke-width="1.6"/><line x1="1654.6" x2="3544.0" y1="1741.3" y2="1741.3" stroke="#8a8a8a" stroke-width="1.6"/><line x1="1654.6" x2="3544.0" y1="1634.1" y2="1634.1" stroke="#8a8a8a" stroke-width="1.6"/><line x1="1654.6" x2="3544.0" y1="1526.8" y2="1526.8" stroke="#8a8a8a" stroke-width="1.6"/><line x1="1654.6" x2="3544.0" y1="1419.5" y2="1419.5" stroke="#8a8a8a" stroke-width="1.6"/><line x1="1654.6" x2="3544.0" y1="1312.2" y2="1312.2" stroke="#8a8a8a" stroke-width="1.6"/><line x1="1654.6" x2="3544.0" y1="1205.0" y2="1205.0" stroke="#8a8a8a" stroke-width="1.6"/>
<clipPath id="plotclip"><rect x="1654.6" y="1150" width="1889.4" height="699.8999999999999"/></clipPath>
<g clip-path="url(#plotclip)">
<polyline points="1740.5,1795.0 1912.2,1768.1 2084.0,1687.7 2255.8,1580.4 2427.5,1607.2 2599.3,1821.8 2771.1,1821.8 2942.8,1419.5 3114.6,1285.4 3286.4,1339.1 3458.1,1392.7" fill="none" stroke="#d96dcd" stroke-width="6.6" stroke-linejoin="round" stroke-linecap="butt"/>
<polyline points="1740.5,1843.2 1912.2,1848.6 2084.0,1848.6 2255.8,1848.6 2427.5,1848.6 2599.3,1848.6 2771.1,1848.6 2942.8,1580.4 3114.6,1365.9 3286.4,1446.3 3458.1,1618.0" fill="none" stroke="#ffff00" stroke-width="6.6" stroke-linejoin="round" stroke-linecap="butt"/>
<polyline points="1740.5,1795.0 1912.2,1821.8 2084.0,1795.0 2255.8,1768.1 2427.5,1768.1 2599.3,1837.9 2771.1,1837.9 2942.8,1473.2 3114.6,1285.4 3286.4,1339.1 3458.1,1419.5" fill="none" stroke="#000000" stroke-width="6.6" stroke-linejoin="round" stroke-linecap="butt"/>
</g>
<g font-family="Liberation Sans, sans-serif" font-size="46.5" fill="#595959">
<text x="1599.8" y="1866.4" text-anchor="middle">0</text><text x="1599.8" y="1759.1" text-anchor="middle">1</text><text x="1599.8" y="1651.9" text-anchor="middle">2</text><text x="1599.8" y="1544.6" text-anchor="middle">3</text><text x="1599.8" y="1437.3" text-anchor="middle">4</text><text x="1599.8" y="1330.0" text-anchor="middle">5</text><text x="1599.8" y="1222.8" text-anchor="middle">6</text>
<text x="1740.5" y="1936.2" text-anchor="middle">2015</text><text x="1912.2" y="1936.2" text-anchor="middle">2016</text><text x="2084.0" y="1936.2" text-anchor="middle">2017</text><text x="2255.8" y="1936.2" text-anchor="middle">2018</text><text x="2427.5" y="1936.2" text-anchor="middle">2019</text><text x="2599.3" y="1936.2" text-anchor="middle">2020</text><text x="2771.1" y="1936.2" text-anchor="middle">2021</text><text x="2942.8" y="1936.2" text-anchor="middle">2022</text><text x="3114.6" y="1936.2" text-anchor="middle">2023</text><text x="3286.4" y="1936.2" text-anchor="middle">2024</text><text x="3458.1" y="1936.2" text-anchor="middle">2025</text>
<text x="2601.5" y="1994" text-anchor="middle">Рік</text>
<text transform="translate(1557.6,1529) rotate(-90)" text-anchor="middle">%</text>
</g>
</svg>


<div id="sbtrack" class="abs"></div>
<div id="sbthumb" class="abs"></div>
</div>
<svg class="abs" style="left:3798px;top:270px" width="34" height="1775" viewBox="3798 270 34 1775">
<path d="M3815,280.4 L3822.3,290.6 H3807.7 Z" fill="#8b8b8b" stroke="#8b8b8b" stroke-width="5.4" stroke-linejoin="round"/>
<path d="M3815,2023.6 L3822.3,2013.4 H3807.7 Z" fill="#8b8b8b" stroke="#8b8b8b" stroke-width="5.4" stroke-linejoin="round"/>
</svg>
<div class="sep" style="left:107.7px"></div><div class="sep" style="left:697.1px"></div><div class="sep" style="left:798.9px"></div><div class="sep" style="left:899.5px"></div><div class="sep" style="left:1854.7px"></div><div class="sep" style="left:2044.2px"></div><div class="sep" style="left:2145.8px"></div><div class="sep" style="left:3386.1px"></div><div class="sep" style="left:3649.7px"></div>
<div id="pginput" class="abs"></div>

<svg id="icons" class="abs" width="3840" height="262" viewBox="0 0 3840 262">
<defs>
<linearGradient id="cp1" x1="0" y1="0" x2="1" y2="1"><stop offset="0" stop-color="#0d3ad0"/><stop offset="0.6" stop-color="#2565dd"/><stop offset="1" stop-color="#2e9af0"/></linearGradient>
<linearGradient id="cp2" x1="0" y1="0" x2="0" y2="1"><stop offset="0" stop-color="#1b9ff5"/><stop offset="0.3" stop-color="#1a93dc"/><stop offset="0.55" stop-color="#4cb07a"/><stop offset="0.78" stop-color="#b3c02e"/><stop offset="1" stop-color="#ffc800"/></linearGradient>
<linearGradient id="cp3" x1="0.75" y1="0" x2="0.3" y2="1"><stop offset="0" stop-color="#a150f0"/><stop offset="0.3" stop-color="#c552c4"/><stop offset="0.62" stop-color="#ee5a8e"/><stop offset="1" stop-color="#ffae4e"/></linearGradient>
<linearGradient id="cp4" x1="0" y1="0" x2="1" y2="1"><stop offset="0" stop-color="#ff9440"/><stop offset="0.6" stop-color="#f9552e"/><stop offset="1" stop-color="#e4362c"/></linearGradient>
</defs>
<!-- active tab -->
<path d="M83,76 Q99,76 99,60 L99,19 Q99,0 118,0 L620,0 Q639,0 639,19 L639,60 Q639,76 655,76 Z" fill="#f7f7f7"/>
<!-- tab actions -->
<rect x="30.6" y="21.6" width="28.8" height="28.6" rx="5.8" class="s" style="stroke:#000;stroke-width:2.3"/>
<path d="M30.6,29.4 V27.4 Q30.6,21.6 36.4,21.6 H53.6 Q59.4,21.6 59.4,27.4 V29.4 Z" fill="#000"/>
<path d="M37,29 V50" class="s" style="stroke:#000;stroke-width:2.2"/>
<!-- pdf favicon -->
<path d="M119.5,19.5 H138 L145.5,27 V52.5 H119.5 Z" fill="#fff" stroke="#1b1b1b" stroke-width="2.6" stroke-linejoin="miter"/>
<path d="M138,19.5 V27 H145.5" fill="none" stroke="#1b1b1b" stroke-width="2"/>
<rect x="115" y="29.4" width="34" height="17.5" fill="#fb4245"/>
<text x="132" y="42.8" font-family="Liberation Sans, sans-serif" font-weight="700" font-size="12.8" fill="#fff" text-anchor="middle" letter-spacing="0.4">PDF</text>
<!-- tab close -->
<path d="M595.5,29.5 L612.5,45 M612.5,29.5 L595.5,45" class="s" style="stroke-width:2.3"/>
<!-- new tab -->
<path d="M663,35 H693.6 M678.3,19.8 V50.4" class="s" style="stroke-width:2.4"/>
<!-- window controls -->
<path d="M3570.5,38 H3592.5" class="s" style="stroke-width:2.2"/>
<rect x="3675" y="33" width="16.5" height="16" rx="3.5" class="s" style="stroke-width:2.2"/>
<path d="M3680,28.4 H3691 Q3696,28.4 3696,33.5 V44.5" class="s" style="stroke-width:2.2"/>
<path d="M3777.5,28 L3799.5,49.3 M3799.5,28 L3777.5,49.3" class="s" style="stroke-width:2.2"/>
<!-- back (disabled) -->
<path d="M62,120.8 H29 M44.5,104.5 L28.5,120.8 L44.5,137" class="s" style="stroke:#b4b4b4"/>
<!-- reload -->
<path d="M141.6,127.5 A16.4,16.4 0 1 1 136.5,110" class="s"/>
<path d="M141.2,105 V115.8 H130.5" class="s"/>
<!-- info -->
<circle cx="215.6" cy="122" r="14.2" class="s" style="stroke:#444;stroke-width:2.3"/>
<path d="M215.6,120.8 V129.3" class="s" style="stroke:#444;stroke-width:2.4"/>
<circle cx="215.6" cy="114.8" r="1.9" fill="#444"/>
<!-- zoom out indicator -->
<circle cx="3291" cy="119.3" r="11.6" class="m"/>
<path d="M3299.5,127.5 L3308.6,136.6 M3284.6,119.3 H3297.4" class="m"/>
<!-- star -->
<path d="M3365.8,106.0 L3370.9,117.2 L3383.1,118.6 L3374.0,126.9 L3376.5,138.9 L3365.8,132.8 L3355.1,138.9 L3357.6,126.9 L3348.5,118.6 L3360.7,117.2Z" class="m" style="stroke:#5a5a5a;stroke-width:2.3"/>
<!-- music / media -->
<path d="M3459.5,131 V113.5 L3473.5,109.8 V118.5 M3459.5,119.3 L3473.5,115.6" class="s" style="stroke-width:2.3"/>
<circle cx="3455.2" cy="131.5" r="4" class="s" style="stroke-width:2.3"/>
<circle cx="3471" cy="129.3" r="7.8" fill="#1b1b1b"/>
<path d="M3468.8,125.6 L3475.2,129.3 L3468.8,133 Z" fill="#f7f7f7"/>
<!-- favorites -->
<path d="M3544,106.8 L3549,117.6 L3556,118.4 M3544,106.8 L3538.6,118.2 L3527.3,119.8 L3536,128.6 L3533.5,137.8 L3544.3,132.2" class="s" style="stroke-width:2.3"/>
<path d="M3551,124.3 H3561 M3549.5,129.8 H3561 M3551,115.5 H3561" class="s" style="stroke-width:2.3;display:none"/>
<path d="M3552.4,115.6 H3561.2 M3549,123 H3561.2 M3549,130.2 H3561.2" class="s" style="stroke-width:2.3"/>
<!-- profile -->
<clipPath id="pclip"><circle cx="3624.8" cy="121.7" r="25.3"/></clipPath>
<circle cx="3624.8" cy="121.7" r="25.3" fill="#d7d5d3"/>
<circle cx="3624.9" cy="115" r="11.3" fill="#908d8b"/>
<ellipse cx="3624.9" cy="146" rx="19.6" ry="17.6" fill="#908d8b" clip-path="url(#pclip)"/>
<circle cx="3644.7" cy="103.9" r="8.3" fill="#f7f7f7"/>
<circle cx="3644.7" cy="103.9" r="6.9" fill="#e00b0b"/>
<!-- more -->
<circle cx="3693.6" cy="121.8" r="2.9" fill="#1b1b1b"/><circle cx="3705.4" cy="121.8" r="2.9" fill="#1b1b1b"/><circle cx="3717.2" cy="121.8" r="2.9" fill="#1b1b1b"/>
<!-- copilot -->
<path d="M3795,99.2 H3798.5 Q3802,99.2 3803.2,103.5 L3804.8,109 Q3805.8,112 3809.5,112 H3790.8 Z" fill="url(#cp1)"/>
<path d="M3776,131.8 H3791.2 L3787,144.4 H3784 Q3780.6,144.4 3779.3,140 L3778,135 Q3777.3,131.8 3773.5,131.8 Z" fill="url(#cp4)"/>
<path d="M3778.5,99.2 H3795 L3784.3,131.8 H3772 Q3765,131.8 3766.3,124.5 L3771.5,105.5 Q3773.3,99.2 3778.5,99.2 Z" fill="url(#cp2)"/>
<path d="M3797.7,112 H3810.5 Q3817.5,112 3816,119.3 L3810.8,138 Q3809,144.4 3803.6,144.4 H3787 Z" fill="url(#cp3)"/>
<!-- PDF toolbar icons -->
<circle cx="42.6" cy="202.3" r="2.6" fill="#1b1b1b"/><circle cx="42.6" cy="211.3" r="2.6" fill="#1b1b1b"/><circle cx="51.6" cy="220.6" r="2.6" fill="#1b1b1b"/>
<path d="M51,202.3 H75.6 M51,211.3 H75.6 M60,220.6 H75.6" class="s"/>
<!-- highlighter -->
<path d="M141.3,196.5 V204.5 Q141.3,206.2 143,206.2 H168.3 Q170,206.2 170,204.5 V196.5" class="s"/>
<path d="M144.8,206.5 V212.5 Q144.8,214.6 147,214.6 H164 Q166.2,214.6 166.2,212.5 V206.5" class="s"/>
<path d="M148.2,215 V228.6 L162,222.4 Q163.2,221.8 163.2,220.4 V215" class="s"/>
<path d="M207,211.2 L214.4,218.6 L221.8,211.2" class="s" style="stroke-width:1.9"/>
<!-- pen -->
<path d="M292,196 V202 Q292,204.8 294.8,204.8 H320.2 Q323,204.8 323,202 V196" class="s"/>
<path d="M294.8,205.4 L304.2,222.2 H310.8 L320.2,205.4" class="s"/>
<path d="M304.6,222.6 L305.3,226.8 Q305.8,229.6 307.5,229.6 Q309.2,229.6 309.7,226.8 L310.4,222.6" class="s" style="stroke-width:2.1"/>
<path d="M559,211.2 L566.4,218.6 L573.8,211.2" class="s" style="stroke-width:1.9"/>
<!-- eraser -->
<path d="M654,195.6 L664.2,205.4 Q665.6,206.8 664.2,208.2 L643.4,229 H640.6 L631,219.4 Q629.6,218 631,216.6 L651.2,195.6 Q652.6,194.4 654,195.6 Z" class="s"/>
<path d="M636.6,212.8 L648.4,224.6 M642,229 H658.4" class="s"/>
<!-- read aloud -->
<path d="M735,225 L743.3,200.2 H744.5 L752.8,225 M738.2,216.6 H749.6" class="s" style="stroke-width:2.3"/>
<path d="M754.2,201.4 Q760.2,204.4 760.8,211 M755,195.4 Q766,199.6 766.6,212.6" class="s" style="stroke-width:2.3"/>
<!-- zoom -/+ -->
<path d="M1633,212 H1655" class="s"/>
<path d="M1712.2,211.2 H1735.6 M1723.9,199.2 V223.2" class="s"/>
<!-- fit width -->
<rect x="1790" y="200.8" width="32.8" height="23.6" rx="4" class="s"/>
<path d="M1795.6,212.6 H1803.6 M1799.6,208.6 L1795.6,212.6 L1799.6,216.6 M1809.4,212.6 H1817.4 M1813.4,208.6 L1817.4,212.6 L1813.4,216.6" class="s" style="stroke-width:2.3"/>
<!-- rotate -->
<path d="M2080,210.6 A17,17 0 1 1 2104.6,226.4" class="s"/>
<path d="M2101,220.4 V229.6 H2110.4" class="s"/>
<circle cx="2096.4" cy="212.6" r="3.4" class="s" style="stroke-width:2.3"/>
<!-- page view (disabled) -->
<path d="M2197,200.2 H2205 L2213.6,208.8 V221 Q2213.6,224.4 2210.2,224.4 H2197 Z M2205,200.2 V208.8 H2213.6" class="g"/>
<path d="M2190,200.2 H2184 Q2180.2,200.2 2180.2,204 V220.6 Q2180.2,224.4 2184,224.4 H2190" class="g" style="stroke-dasharray:5 3.2"/>
<!-- search -->
<circle cx="3333.6" cy="209.4" r="11.5" class="s"/>
<path d="M3341.9,217.7 L3351.2,227" class="s"/>
<!-- print -->
<path d="M3428.6,204.4 V201.4 Q3428.6,198.2 3431.8,198.2 H3445.4 Q3448.6,198.2 3448.6,201.4 V204.4" class="s"/>
<path d="M3428.4,220.6 H3426 Q3422,220.6 3422,216.6 V208.6 Q3422,204.6 3426,204.6 H3451.2 Q3455.2,204.6 3455.2,208.6 V216.6 Q3455.2,220.6 3451.2,220.6 H3449" class="s"/>
<rect x="3428.6" y="213.6" width="20" height="13" rx="2.6" class="s"/>
<!-- save (disabled) -->
<path d="M3509,198.8 H3526.6 L3533.4,205.6 V223 Q3533.4,226.4 3530,226.4 H3509 Q3505.6,226.4 3505.6,223 V202.2 Q3505.6,198.8 3509,198.8 Z" class="g"/>
<path d="M3512,198.8 V206.4 H3525.4 V198.8 M3510.6,226.4 V215.4 Q3510.6,213.4 3512.6,213.4 H3526.4 Q3528.4,213.4 3528.4,215.4 V226.4" class="g"/>
<!-- save as -->
<path d="M3597,226.4 H3590 Q3586.6,226.4 3586.6,223 V202.2 Q3586.6,198.8 3590,198.8 H3607.6 L3614.4,205.6 V209" class="s"/>
<path d="M3593,198.8 V206.4 H3606.4 V198.8 M3591.6,226 V215.4 Q3591.6,213.4 3593.6,213.4 H3601" class="s"/>
<path d="M3611.6,213.2 Q3614,210.8 3616.4,213.2 Q3618.8,215.6 3616.4,218 L3606.6,227.4 L3600.2,229.4 L3602,222.8 Z" fill="#1b1b1b" stroke="#1b1b1b" stroke-width="1.6" stroke-linejoin="round"/>
<!-- expand -->
<path d="M3688,226.2 L3715.8,198.6 M3703.6,198.2 H3716.2 V210.8 M3687.6,214 V226.6 H3700.2" class="s"/>
<!-- gear -->
<path d="M3777.44,198.43 L3778.33,192.99 Q3782.50,191.20 3786.67,192.99 L3787.56,198.43 Q3787.40,201.91 3790.34,200.03 L3795.49,198.09 Q3799.13,200.80 3799.66,205.31 L3795.40,208.80 Q3792.30,210.40 3795.40,212.00 L3799.66,215.49 Q3799.13,220.00 3795.49,222.71 L3790.34,220.77 Q3787.40,218.89 3787.56,222.37 L3786.67,227.81 Q3782.50,229.60 3778.33,227.81 L3777.44,222.37 Q3777.60,218.89 3774.66,220.77 L3769.51,222.71 Q3765.87,220.00 3765.34,215.49 L3769.60,212.00 Q3772.70,210.40 3769.60,208.80 L3765.34,205.31 Q3765.87,200.80 3769.51,198.09 L3774.66,200.03 Q3777.60,201.91 3777.44,198.43 Z" class="s" style="stroke-width:2.3"/>
<circle cx="3782.5" cy="210.4" r="4.5" class="s" style="stroke-width:2.3"/>
<!-- scrollbar arrows -->
</svg>

<div class="t ui" style="left:173.7px;top:20.3px;font-size:26px;line-height:31.2px;">2_5188358602812849155.pdf</div>
<div class="t " style="left:243.7px;top:106.9px;font-size:25px;line-height:30.0px;font-weight:700;color:#484848;letter-spacing:-0.7px">Файл</div>
<div class="t ui" style="left:342.9px;top:103.4px;font-size:31.4px;line-height:37.68px;letter-spacing:-0.25px">C:/Users/TaMi/Downloads/2_5188358602812849155.pdf</div>
<div class="t ui" style="left:354.9px;top:193.9px;font-size:32px;line-height:38.4px;letter-spacing:-0.95px">Накреслити</div>
<div class="t ui" style="left:829.2px;top:186.7px;font-size:37.5px;line-height:45.0px;letter-spacing:0">a</div>
<div class="t ui" style="left:848.6px;top:194.2px;font-size:30px;line-height:36.0px;font-family:&quot;Liberation Sans&quot;,&quot;Noto Sans CJK JP&quot;,sans-serif;transform-origin:0 0;transform:scaleX(0.78)">あ</div>
<div class="t ui" style="left:938.6px;top:193.9px;font-size:32px;line-height:38.4px;letter-spacing:-0.41px">Запитати в Copilot</div>
<div class="t ui" style="left:1909.2px;top:198.4px;font-size:27.5px;line-height:33.0px;">1</div>
<div class="t ui" style="left:1983.9px;top:198.8px;font-size:27px;line-height:32.4px;letter-spacing:-1px">з 1</div>

</body></html>
